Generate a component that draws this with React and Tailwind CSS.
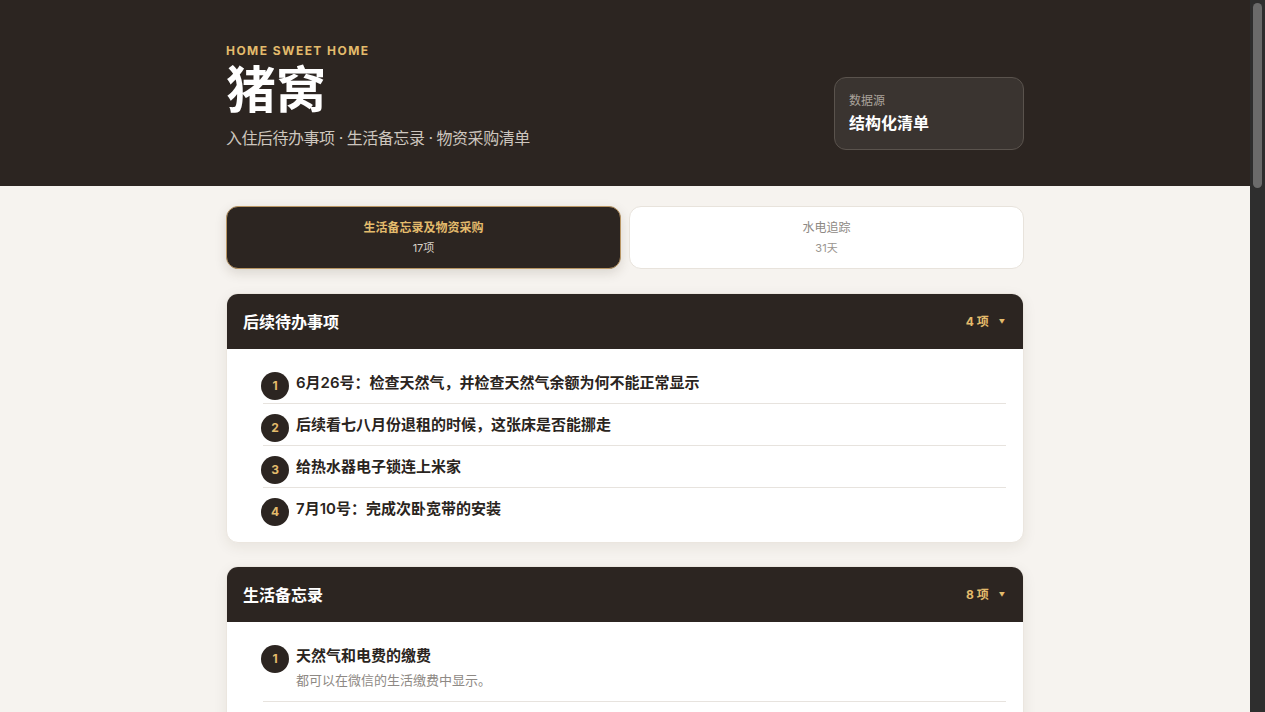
import React from 'react';

const todoItems = [
    { title: '6月26号：检查天然气，并检查天然气余额为何不能正常显示' },
    { title: '后续看七八月份退租的时候，这张床是否能挪走' },
    { title: '给热水器电子锁连上米家' },
    { title: '7月10号：完成次卧宽带的安装' },
];

const memoItems = [
    { title: '天然气和电费的缴费', desc: '都可以在微信的生活缴费中显示。' },
    { title: '水费的缴纳', desc: '水费由物业代收，每季度在物业前台缴纳一次。' },
    { title: '垃圾分类投放', desc: '楼下垃圾站每天早7点到晚9点开放，厨余垃圾需单独投放。' },
    { title: '快递收取', desc: '快递默认放在小区东门的丰巢柜，大件会送到门口。' },
    { title: '门禁卡', desc: '共两张门禁卡，一张放在玄关抽屉里备用。' },
    { title: '空调滤网清洗', desc: '每两个月清洗一次，夏季使用频繁时可适当增加。' },
    { title: '热水器使用', desc: '洗澡前提前半小时开启，温度设置在50度左右即可。' },
    { title: '房东联系方式', desc: '有维修问题先在微信上联系房东，紧急情况直接打电话。' },
];

const purchaseItems = [
    { title: '晾衣架', desc: '阳台用，落地折叠款即可。' },
    { title: '收纳箱', desc: '衣柜顶部放换季衣物。' },
    { title: '浴室防滑垫', desc: '淋浴区门口一块。' },
    { title: '台灯', desc: '书桌用，暖光可调节亮度。' },
    { title: '垃圾桶', desc: '厨房和卧室各一个，带盖。' },
];

function Badge({ n }) {
    return (
        <span className="shrink-0 w-7 h-7 rounded-full bg-[#2c2521] text-[#e3bb6c] text-[12px] font-bold flex items-center justify-center">
            {n}
        </span>
    );
}

// 单个清单分组
function Section({ title, items }) {
    return (
        <section className="bg-white rounded-xl overflow-hidden border border-[#ebe6df] shadow-[0_4px_14px_rgba(60,45,30,0.08)]">
            <div className="h-[55px] bg-[#2c2521] flex items-center justify-between pl-[16px] pr-[18px]">
                <h2 className="text-white text-[16px] font-semibold">{title}</h2>
                <div className="flex items-center gap-[10px] text-[#e3bb6c] text-[12px] font-bold">
                    <span>{items.length} 项</span>
                    <span className="text-[6px]">▼</span>
                </div>
            </div>
            <ol className="pl-[34px] pr-[17px] pt-[13px] pb-[13px]">
                {items.map((item, i) => (
                    <li
                        key={i}
                        className={
                            'flex items-start gap-[7px] pt-[10px] ml-[2px] ' +
                            (item.desc ? 'pb-[11px] ' : 'pb-[3px] ') +
                            (i < items.length - 1 ? 'border-b border-[#e7e3de]' : '')
                        }
                    >
                        <span className="-ml-[2px]">
                            <Badge n={i + 1} />
                        </span>
                        <div className="min-w-0">
                            <div className="text-[15px] leading-[22px] font-semibold text-[#2a2420]">{item.title}</div>
                            {item.desc && (
                                <div className="mt-[3px] text-[13px] leading-[20px] text-[#8e8984]">{item.desc}</div>
                            )}
                        </div>
                    </li>
                ))}
            </ol>
        </section>
    );
}

// 右侧滚动条（截图里的深色滚动条）
function ScrollTrack() {
    return (
        <div className="fixed top-0 right-0 h-screen w-[15px] bg-[#2e2e2e] px-[3px] py-[3px]">
            <div className="h-[185px] rounded-full bg-[#6b6b6b]" />
        </div>
    );
}

export default function App() {
    return (
        <div
            className="min-h-screen pr-[15px] bg-[#f6f3ef] text-[#2a2420]"
            style={{ fontFamily: 'Inter, "Noto Sans CJK SC", "Noto Sans", sans-serif' }}
        >
            <header className="bg-[#2c2521]">
                <div className="max-w-[798px] mx-auto pt-[43px] pb-[36px] flex items-end justify-between">
                    <div>
                        <div className="text-[12px] leading-[16px] font-bold tracking-[0.12em] text-[#e3bb6c]">HOME SWEET HOME</div>
                        <h1 className="mt-[2px] text-[50px] leading-[59px] font-bold text-white">猪窝</h1>
                        <p className="mt-[6px] text-[16px] leading-[24px] tracking-[-0.03em] text-[#cdc6be]">入住后待办事项 · 生活备忘录 · 物资采购清单</p>
                    </div>
                    <div className="w-[190px] h-[73px] rounded-xl border border-[#5a534d] bg-[#3a3430] px-[14px] flex flex-col justify-center">
                        <div className="text-[12px] leading-[16px] text-[#aaa39b]">数据源</div>
                        <div className="mt-[3px] text-[16px] leading-[22px] font-bold text-white">结构化清单</div>
                    </div>
                </div>
            </header>

            <main className="max-w-[798px] mx-auto pb-[60px]">
                <div className="mt-[20px] grid grid-cols-2 gap-[8px]">
                    <button className="h-[63px] rounded-xl bg-[#2c2521] border border-[#b89563] shadow-[0_4px_12px_rgba(60,45,30,0.15)] flex flex-col items-center justify-center">
                        <span className="text-[12px] leading-[16px] font-bold text-[#e3bb6c]">生活备忘录及物资采购</span>
                        <span className="mt-[5px] text-[11px] leading-[14px] text-[#d9d2c9]">17项</span>
                    </button>
                    <button className="h-[63px] rounded-xl bg-white border border-[#e8e3dc] flex flex-col items-center justify-center">
                        <span className="text-[12px] leading-[16px] text-[#8e8984]">水电追踪</span>
                        <span className="mt-[5px] text-[11px] leading-[14px] text-[#9a958f]">31天</span>
                    </button>
                </div>

                <div className="mt-[24px] flex flex-col gap-[23px]">
                    <Section title="后续待办事项" items={todoItems} />
                    <Section title="生活备忘录" items={memoItems} />
                    <Section title="物资采购清单" items={purchaseItems} />
                </div>
            </main>

            <ScrollTrack />
        </div>
    );
}
